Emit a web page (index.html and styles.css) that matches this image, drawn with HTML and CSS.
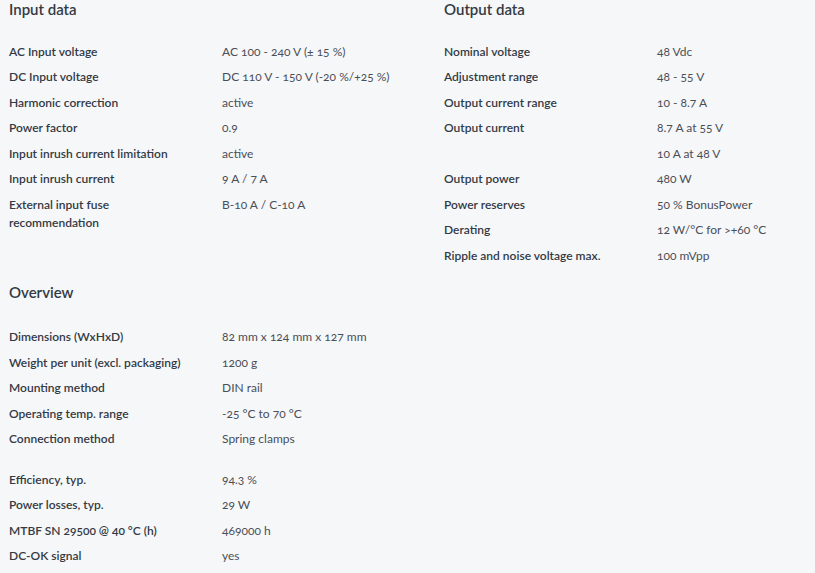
FILE: index.html
```html
<!DOCTYPE html>
<html lang="en">
<head>
<meta charset="utf-8">
<title>Technical data</title>
<link rel="stylesheet" href="styles.css">
</head>
<body>
<div class="page">
  <div class="col">
    <section class="section">
      <h2 class="heading">Input data</h2>
      <dl class="specs">
        <dt>AC Input voltage</dt><dd>AC 100 - 240 V (± 15 %)</dd>
        <dt>DC Input voltage</dt><dd>DC 110 V - 150 V (-20 %/+25 %)</dd>
        <dt>Harmonic correction</dt><dd>active</dd>
        <dt>Power factor</dt><dd>0.9</dd>
        <dt>Input inrush current limitation</dt><dd>active</dd>
        <dt>Input inrush current</dt><dd>9 A / 7 A</dd>
        <dt>External input fuse recommendation</dt><dd>B-10 A / C-10 A</dd>
      </dl>
    </section>
    <section class="section section-next">
      <h2 class="heading">Overview</h2>
      <dl class="specs">
        <dt>Dimensions (WxHxD)</dt><dd>82 mm x 124 mm x 127 mm</dd>
        <dt>Weight per unit (excl. packaging)</dt><dd>1200 g</dd>
        <dt>Mounting method</dt><dd>DIN rail</dd>
        <dt>Operating temp. range</dt><dd>-25 °C to 70 °C</dd>
        <dt>Connection method</dt><dd>Spring clamps</dd>
      </dl>
      <dl class="specs specs-next">
        <dt>Efficiency, typ.</dt><dd>94.3 %</dd>
        <dt>Power losses, typ.</dt><dd>29 W</dd>
        <dt>MTBF SN 29500 @ 40 °C (h)</dt><dd>469000 h</dd>
        <dt>DC-OK signal</dt><dd>yes</dd>
      </dl>
    </section>
  </div>
  <div class="col">
    <section class="section">
      <h2 class="heading">Output data</h2>
      <dl class="specs">
        <dt>Nominal voltage</dt><dd>48 Vdc</dd>
        <dt>Adjustment range</dt><dd>48 - 55 V</dd>
        <dt>Output current range</dt><dd>10 - 8.7 A</dd>
        <dt>Output current</dt><dd>8.7 A at 55 V</dd>
        <dt></dt><dd>10 A at 48 V</dd>
        <dt>Output power</dt><dd>480 W</dd>
        <dt>Power reserves</dt><dd>50 % BonusPower</dd>
        <dt>Derating</dt><dd>12 W/°C for &gt;+60 °C</dd>
        <dt>Ripple and noise voltage max.</dt><dd>100 mVpp</dd>
      </dl>
    </section>
  </div>
</div>
</body>
</html>
```

FILE: styles.css
```css
html, body {
  margin: 0;
  padding: 0;
  background: #f6f7f9;
}
body {
  font-family: "Lato", "Noto Sans", sans-serif;
  font-variant-numeric: oldstyle-nums;
  color: #333a44;
}
.page {
  display: grid;
  grid-template-columns: 435px 371px;
  padding: 0 0 0 9px;
}
.heading {
  margin: 0 0 21px;
  padding-top: 1px;
  font-size: 15px;
  line-height: 17px;
  font-weight: 600;
  color: #333a44;
}
.section-next {
  margin-top: 47px;
}
.section-next .heading {
  margin-bottom: 24px;
}
.specs {
  display: grid;
  grid-template-columns: 213px 1fr;
  margin: 0;
  font-size: 12px;
  line-height: 18px;
}
.specs-next {
  margin-top: 15px;
}
.specs dt {
  font-weight: 600;
  padding: 3.75px 26px 3.75px 0;
  color: #333a44;
}
.specs dd {
  margin: 0;
  padding: 3.75px 0;
  color: #4a4e56;
}
```
